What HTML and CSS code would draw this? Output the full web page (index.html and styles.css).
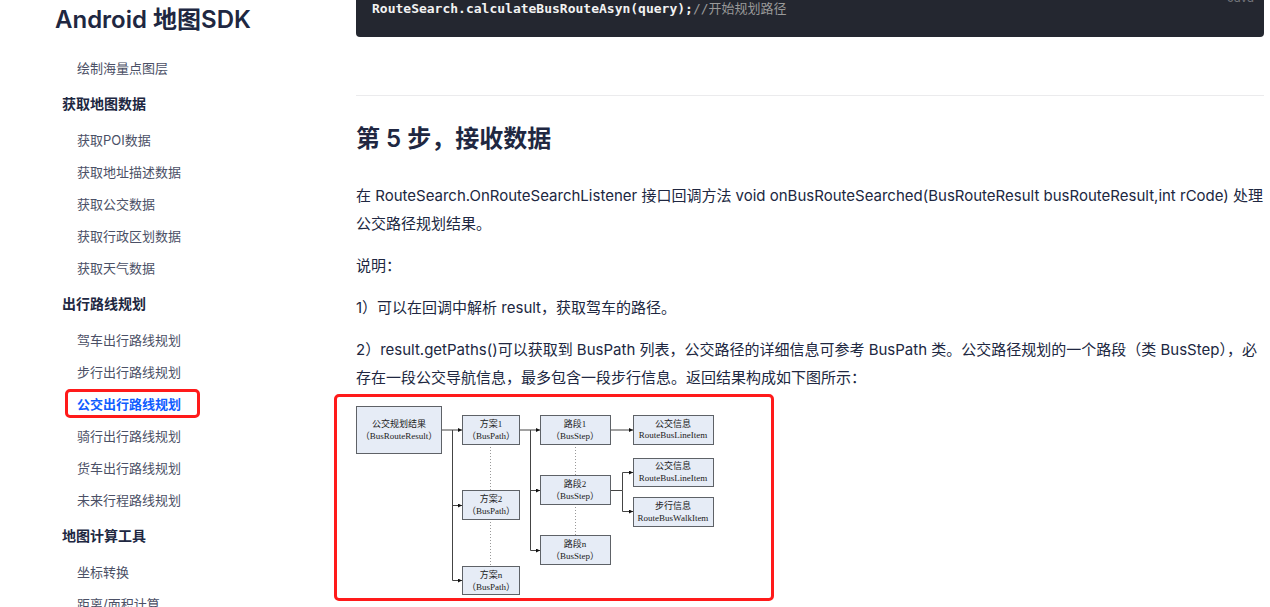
FILE: index.html
```html
<!DOCTYPE html>
<html lang="zh-CN">
<head>
<meta charset="utf-8">
<title>Android 地图SDK</title>
<link rel="stylesheet" href="styles.css">
</head>
<body>
<div class="page">
  <aside class="sidebar">
    <h1 class="sidebar-title">Android 地图SDK</h1>
    <nav class="menu">
      <ul class="menu-list">
        <li><a href="#">绘制海量点图层</a></li>
      </ul>
      <h2 class="menu-heading">获取地图数据</h2>
      <ul class="menu-list">
        <li><a href="#">获取POI数据</a></li>
        <li><a href="#">获取地址描述数据</a></li>
        <li><a href="#">获取公交数据</a></li>
        <li><a href="#">获取行政区划数据</a></li>
        <li><a href="#">获取天气数据</a></li>
      </ul>
      <h2 class="menu-heading">出行路线规划</h2>
      <ul class="menu-list">
        <li><a href="#">驾车出行路线规划</a></li>
        <li><a href="#">步行出行路线规划</a></li>
        <li><a href="#" class="active" aria-current="page">公交出行路线规划</a></li>
        <li><a href="#">骑行出行路线规划</a></li>
        <li><a href="#">货车出行路线规划</a></li>
        <li><a href="#">未来行程路线规划</a></li>
      </ul>
      <h2 class="menu-heading">地图计算工具</h2>
      <ul class="menu-list">
        <li><a href="#">坐标转换</a></li>
        <li><a href="#">距离/面积计算</a></li>
      </ul>
    </nav>
  </aside>
  <main class="content">
    <div class="code">
      <span class="code-lang">Java</span>
      <pre><code><b>RouteSearch.calculateBusRouteAsyn(query);</b><span class="comment">//开始规划路径</span></code></pre>
    </div>
    <hr class="divider">
    <h2 class="step-title">第 5 步，接收数据</h2>
    <p>在 RouteSearch.OnRouteSearchListener 接口回调方法 void onBusRouteSearched(BusRouteResult busRouteResult,int rCode) 处理公交路径规划结果。</p>
    <p>说明：</p>
    <p>1）可以在回调中解析 result，获取驾车的路径。</p>
    <p>2）result.getPaths()可以获取到 BusPath 列表，公交路径的详细信息可参考 BusPath 类。公交路径规划的一个路段（类 BusStep），必存在一段公交导航信息，最多包含一段步行信息。返回结果构成如下图所示：</p>
    <figure class="diagram">
      <svg width="400" height="209" viewBox="0 0 400 209" role="img" aria-label="公交规划结果">
        <defs>
          <marker id="arrow" markerWidth="5" markerHeight="6" refX="4" refY="2" orient="auto" markerUnits="userSpaceOnUse">
            <path class="arrow-head" d="M0 0L4 2L0 4Z"/>
          </marker>
        </defs>
        <g class="dotted">
          <path d="M134.5 52V99M134.5 127V174M219.5 52V84M219.5 112V144"/>
        </g>
        <g class="wire">
          <path d="M96.5 38V188.5H106" marker-end="url(#arrow)"/>
          <path d="M96.5 113.5H106" marker-end="url(#arrow)"/>
          <path d="M85 38H106" marker-end="url(#arrow)"/>
          <path d="M163 38H184" marker-end="url(#arrow)"/>
          <path d="M174.5 38V158.5H184" marker-end="url(#arrow)"/>
          <path d="M174.5 98.5H184" marker-end="url(#arrow)"/>
          <path d="M255 38H277" marker-end="url(#arrow)"/>
          <path d="M255 98.5H266.5V80.5H277" marker-end="url(#arrow)"/>
          <path d="M266.5 98.5V119.5H277" marker-end="url(#arrow)"/>
        </g>
        <g class="node">
          <rect x="0.5" y="14.5" width="85" height="47"/>
          <rect x="106.5" y="23.5" width="57" height="29"/>
          <rect x="106.5" y="98.5" width="57" height="29"/>
          <rect x="106.5" y="174.5" width="57" height="28"/>
          <rect x="184.5" y="23.5" width="70" height="29"/>
          <rect x="184.5" y="83.5" width="70" height="29"/>
          <rect x="184.5" y="143.5" width="70" height="29"/>
          <rect x="277.5" y="23.5" width="80" height="29"/>
          <rect x="277.5" y="66.5" width="80" height="28"/>
          <rect x="277.5" y="105.5" width="80" height="29"/>
        </g>
        <g class="label">
          <text x="43" y="35">公交规划结果</text><text x="43" y="47">（BusRouteResult）</text>
          <text x="135" y="35">方案1</text><text x="135" y="47">（BusPath）</text>
          <text x="135" y="110">方案2</text><text x="135" y="122">（BusPath）</text>
          <text x="135" y="186">方案n</text><text x="135" y="198">（BusPath）</text>
          <text x="219" y="35">路段1</text><text x="219" y="47">（BusStep）</text>
          <text x="219" y="95">路段2</text><text x="219" y="107">（BusStep）</text>
          <text x="219" y="155">路段n</text><text x="219" y="167">（BusStep）</text>
          <text x="317" y="35">公交信息</text><text x="317" y="46">RouteBusLineItem</text>
          <text x="317" y="77">公交信息</text><text x="317" y="89">RouteBusLineItem</text>
          <text x="317" y="117">步行信息</text><text x="317" y="129">RouteBusWalkItem</text>
        </g>
      </svg>
    </figure>
    <p>公交路径规划的每个方案由多个路段 BusStep 组成，每个路段包含步行与公交导航信息，详细信息可参考 BusStep 类的接口。</p>
  </main>
</div>
</body>
</html>
```
FILE: styles.css
```css
*,
*::after {
  box-sizing: border-box;
}

body {
  margin: 0;
  background: #fff;
  color: #202741;
  font-family: Inter, "Noto Sans CJK SC", sans-serif;
  font-size: 15px;
  line-height: 28px;
}

.page {
  display: flex;
  height: 100vh;
  overflow: hidden;
}

.sidebar {
  flex: 0 0 356px;
  padding-left: 55px;
}

.sidebar-title {
  margin: 0 0 12px;
  font-size: 24px;
  font-weight: 600;
  line-height: 40px;
}

.menu-heading {
  margin: 0;
  padding-left: 7px;
  font-size: 14px;
  font-weight: 600;
  line-height: 40px;
}

.menu-list {
  margin: 0;
  padding: 0 0 0 22px;
  list-style: none;
  font-size: 13px;
  line-height: 32px;
}

.menu-list li {
  height: 32px;
}

.menu-list a {
  color: #4b5066;
  text-decoration: none;
}

.menu-list .active {
  position: relative;
  color: #0f5cff;
  font-weight: 600;
}

/* Red callouts */
.menu-list .active::after,
.diagram::after {
  content: "";
  position: absolute;
  border: 3px solid #ff1a1a;
  border-radius: 5px;
  pointer-events: none;
}

.menu-list .active::after {
  inset: -7px -19px -6px -12px;
}

.content {
  flex: 1;
  min-width: 0;
  padding-right: 6px;
}

.code {
  position: relative;
  padding: 0 16px 20px;
  border-radius: 0 0 4px 4px;
  background: #242730;
  color: #f2f2f2;
}

.code pre {
  margin: 0;
  font-size: 13px;
  line-height: 17px;
}

.code code {
  font-family: "DejaVu Sans Mono", "Noto Sans CJK SC", monospace;
  font-size: 13px;
}

.code .comment {
  color: #999;
}

.code-lang {
  position: absolute;
  top: -16px;
  right: 10px;
  color: #73757b;
  font-size: 12px;
}

.divider {
  margin: 58px 0 0;
  border: 0;
  border-top: 1px solid #ebebed;
}

.step-title {
  margin: 23px 0;
  font-size: 24px;
  font-weight: 600;
  line-height: 40px;
}

.content p {
  margin: 0 0 14px;
}

.diagram {
  position: relative;
  margin: -14px 0 0;
  line-height: 0;
}

.diagram::after {
  top: 2px;
  left: -22px;
  width: 440px;
  height: 207px;
}

.node rect {
  fill: #e6ecf6;
  stroke: #5e6267;
}

.wire path {
  fill: none;
  stroke: #444;
}

.arrow-head {
  fill: #111;
}

.dotted path {
  fill: none;
  stroke: #999;
  stroke-dasharray: 1 2;
}

.label {
  fill: #222;
  font-family: "Liberation Serif", "Noto Sans CJK SC", serif;
  font-size: 9px;
  text-anchor: middle;
}
```
